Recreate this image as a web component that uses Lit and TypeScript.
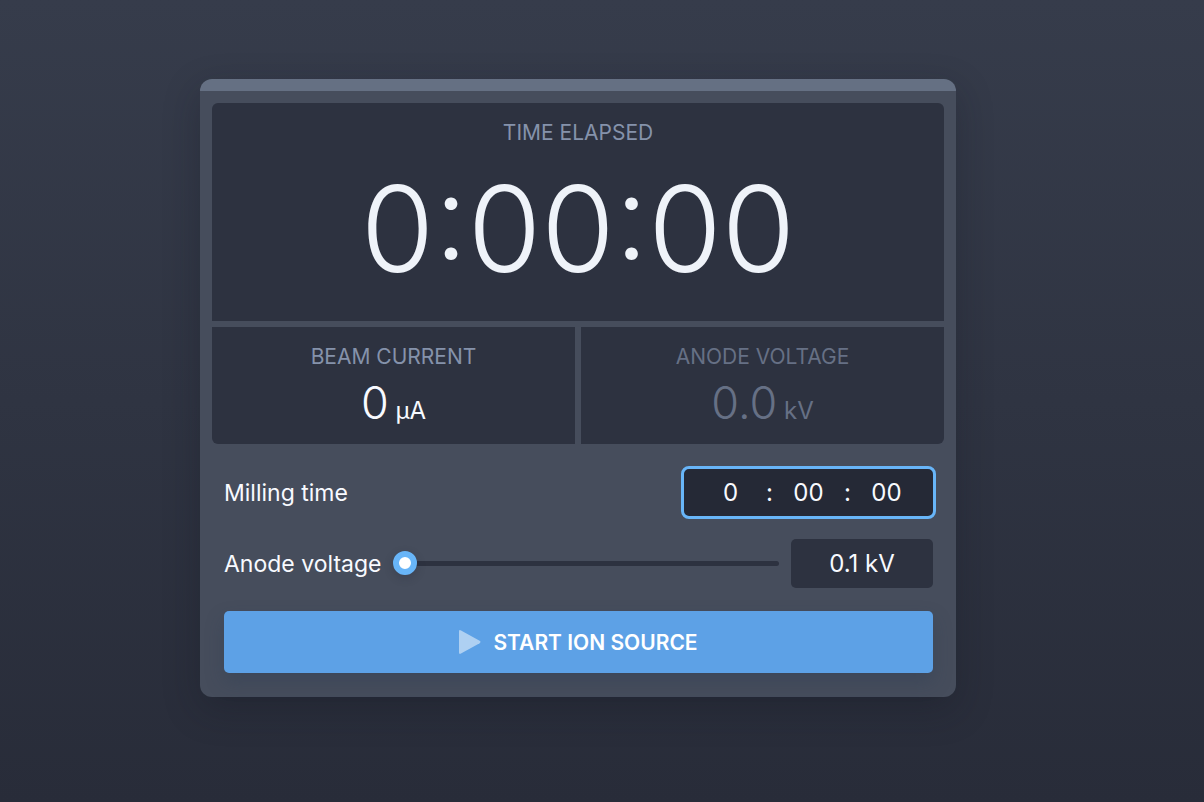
import { LitElement, html, css } from "lit";
import { customElement, state } from "lit/decorators.js";

@customElement("app-root")
export class AppRoot extends LitElement {
  static styles = css`
    :host {
      display: block;
      font-family: Inter, "Noto Sans", sans-serif;
      color: #f8faff;
    }
    * {
      box-sizing: border-box;
    }
    .page {
      min-height: 100vh;
      padding: 79px 248px 104px 200px;
      background: linear-gradient(#363c4b, #282c39);
    }
    .card {
      border-top: 12px solid #657083;
      border-radius: 12px;
      background: #464d5c;
      padding: 12px 12px 24px;
      box-shadow: 0 12px 36px rgba(20, 22, 34, 0.3);
    }
    .readouts {
      display: grid;
      grid-template-columns: 1fr 1fr;
      gap: 6px;
      border-radius: 6px;
      overflow: hidden;
      text-align: center;
    }
    .readout {
      background: #2d3240;
      height: 117px;
      padding-top: 16px;
    }
    .elapsed {
      grid-column: 1 / -1;
      height: 218px;
    }
    .label {
      margin: 0;
      font-size: 21px;
      line-height: 28px;
      font-weight: 400;
      color: #8592ab;
    }
    .clock {
      font-size: 119px;
      line-height: 164px;
      font-weight: 300;
      color: #eff3f9;
    }
    .value {
      font-size: 45px;
      line-height: 64px;
      font-weight: 300;
    }
    .unit {
      font-size: 24px;
      font-weight: 400;
      white-space: pre;
    }
    .dim .label,
    .dim .value {
      color: #667085;
    }
    .form {
      padding: 22px 11px 0 12px;
    }
    .row {
      display: flex;
      align-items: center;
      font-size: 24px;
    }
    .row label {
      flex: none;
      font-size: 23px;
    }
    .time {
      display: flex;
      align-items: center;
      justify-content: center;
      width: 255px;
      height: 53px;
      margin: 0 -3px 0 auto;
      border: 3px solid #68b5f8;
      border-radius: 8px;
      background: #252936;
    }
    input,
    button {
      font: inherit;
      color: inherit;
      border: 0;
      margin: 0;
      padding: 0;
      outline: 0;
    }
    .part {
      width: 71px;
      background: none;
      text-align: center;
    }
    .voltage {
      gap: 12px;
      margin-top: 20px;
    }
    .range {
      -webkit-appearance: none;
      appearance: none;
      flex: 1;
      min-width: 0;
      height: 24px;
      background: none;
    }
    .range::-webkit-slider-runnable-track {
      height: 5px;
      border-radius: 3px;
      background: #2d3240;
    }
    .range::-webkit-slider-thumb {
      -webkit-appearance: none;
      box-sizing: border-box;
      width: 24px;
      height: 24px;
      margin-top: -10px;
      border: 6px solid #68b5f8;
      border-radius: 50%;
      background: #fff;
      box-shadow: 0 3px 8px rgba(40, 44, 60, 0.3);
    }
    .kv {
      width: 142px;
      height: 49px;
      border-radius: 5px;
      background: #2d3240;
      text-align: center;
    }
    .start {
      display: flex;
      align-items: center;
      justify-content: center;
      gap: 12px;
      width: 100%;
      height: 62px;
      margin-top: 23px;
      border-radius: 5px;
      background: #5da1e6;
      color: #fff;
      font-size: 21px;
      font-weight: 600;
      box-shadow: 0 9px 18px rgba(44, 60, 84, 0.35);
    }
  `;

  @state() private voltage = 0.1;

  private onVoltage(e: Event) {
    this.voltage = Number((e.target as HTMLInputElement).value);
  }

  render() {
    return html`
      <main class="page">
        <section class="card">
          <div class="readouts">
            <div class="readout elapsed">
              <h2 class="label">TIME ELAPSED</h2>
              <div class="clock">0:00:00</div>
            </div>
            <div class="readout">
              <h2 class="label">BEAM CURRENT</h2>
              <div class="value">0<span class="unit"> µA</span></div>
            </div>
            <div class="readout dim">
              <h2 class="label">ANODE VOLTAGE</h2>
              <div class="value">0.0<span class="unit"> kV</span></div>
            </div>
          </div>
          <div class="form">
            <div class="row">
              <label for="hours">Milling time</label>
              <div class="time">
                <input class="part" id="hours" aria-label="Milling time, hours" value="0" />
                <span>:</span>
                <input class="part" aria-label="Minutes" value="00" />
                <span>:</span>
                <input class="part" aria-label="Seconds" value="00" />
              </div>
            </div>
            <div class="row voltage">
              <label for="voltage">Anode voltage</label>
              <input class="range" id="voltage" type="range" min="0.1" max="10" step="0.1"
                .value=${String(this.voltage)} @input=${this.onVoltage} />
              <input class="kv" aria-label="Anode voltage value" readonly
                .value=${`${this.voltage.toFixed(1)} kV`} />
            </div>
            <button class="start" type="button">
              <svg width="22" height="24" viewBox="0 0 22 24" aria-hidden="true">
                <path d="M0 1.500Q0 -.6 2 .4L20.600 10.800Q22.400 12 20.600 13.200L2 23.600Q0 24.600 0 22.500Z" fill="#aed0f2" />
              </svg>
              START ION SOURCE
            </button>
          </div>
        </section>
      </main>
    `;
  }
}
